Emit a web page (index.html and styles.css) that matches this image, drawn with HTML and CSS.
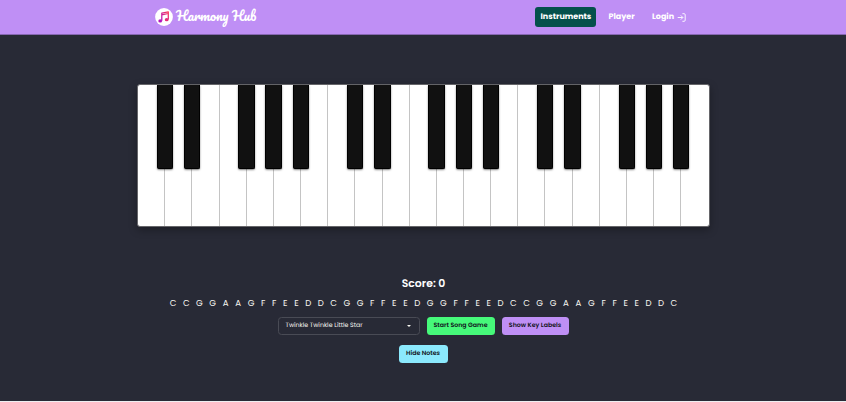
FILE: index.html
```
<!DOCTYPE html>
<html lang="en">
<head>
<meta charset="utf-8">
<title>Harmony Hub</title>
<link rel="stylesheet" href="styles.css">
</head>
<body>
<header class="navbar">
  <a class="brand">
    <svg class="brand-icon" viewBox="0 0 18 18">
      <defs><linearGradient id="note" x1="0" y1="1" x2="1" y2="0"><stop offset="0" stop-color="#b010c0"/><stop offset="1" stop-color="#ff3b55"/></linearGradient></defs>
      <circle cx="9" cy="9" r="8.9" fill="#fff"/>
      <path d="M6.8 12.8V5.1l6.5-1.3v7.7M6.8 6.8l6.5-1.3" fill="none" stroke="url(#note)" stroke-width="1.25" stroke-linejoin="round"/>
      <ellipse cx="5.2" cy="12.9" rx="1.9" ry="1.6" fill="#b514bb"/>
      <ellipse cx="11.7" cy="11.7" rx="1.9" ry="1.6" fill="#e42b78"/>
    </svg>
    <span class="wordmark">Harmony Hub</span>
  </a>
  <nav class="links">
    <a class="link active">Instruments</a>
    <a class="link">Player</a>
    <a class="link">Login
      <svg class="login-icon" viewBox="0 0 9 9"><path d="M.7 4.5h5M3.8 2.4l2.1 2.1-2.1 2.1M5.4.7h1.7q1.1 0 1.1 1.1v5.4q0 1.1-1.1 1.1H5.4"/></svg></a>
  </nav>
</header>
<main>
  <div class="piano" id="piano"></div>
  <h1 class="score">Score: 0</h1>
  <div class="notes" id="notes"></div>
  <div class="controls">
    <div class="select"><span>Twinkle Twinkle Little Star</span><i class="caret"></i></div>
    <button class="btn start">Start Song Game</button>
    <button class="btn labels">Show Key Labels</button>
  </div>
  <button class="btn hide">Hide Notes</button>
</main>
<script src="app.js"></script>
</body>
</html>
```
FILE: styles.css
```
* { box-sizing: border-box; }
body {
  margin: 0;
  height: 402px;
  overflow: hidden;
  background: #282a36;
  color: #f8f8f2;
  font-family: Poppins, "Open Sans", sans-serif;
  text-rendering: geometricPrecision;
}
.navbar {
  height: 35px;
  padding: 0 155px;
  display: flex;
  justify-content: space-between;
  background: #bf8ff5;
  border-bottom: 1px solid #8767b2;
}
.brand { display: flex; align-items: flex-start; }
.brand-icon { width: 18px; height: 18px; margin-top: 8px; }
.wordmark {
  margin: 3px 0 0 3px;
  color: #fff;
  font: 400 13.35px/28px Pacifico, cursive;
  white-space: nowrap;
}
.links { display: flex; gap: 7px; margin-top: 7px; }
.link {
  height: 20px;
  padding: 0 5.5px;
  display: flex;
  align-items: center;
  border-radius: 3px;
  color: #fff;
  font-size: 8px;
  line-height: 20px;
  font-weight: 700;
  white-space: nowrap;
}
.link.active { width: 61px; background: #05504c; }
.link:nth-child(2) { width: 37px; }
.link:nth-child(3) { width: 44px; padding-left: 5px; }
.login-icon { width: 9px; height: 9px; margin-left: 3px; fill: none; stroke: #fff; stroke-width: .9; flex: none; }
main { display: flex; flex-direction: column; align-items: center; height: 366px; }
body::after { content: ""; display: block; height: 1px; background: #eeeef1; }
.piano {
  width: 573px;
  height: 143px;
  flex: none;
  margin-top: 49px;
  padding-left: .6px;
  display: flex;
  border: 1px solid #66666a;
  border-radius: 3px;
  background: #fff;
  box-shadow: 0 3px 9px rgba(0, 0, 0, .3);
}
.white {
  position: relative;
  flex: 1;
  background: linear-gradient(#c4c4c4, #c4c4c4) right / 1px 100% no-repeat;
}
.white:last-child { background: none; }
.black {
  position: absolute;
  z-index: 1;
  top: 0;
  right: -8px;
  width: 16.4px;
  height: 84px;
  background: #111;
  border: 1px solid #000;
  border-top: 0;
  border-radius: 0 0 2px 2px;
  box-shadow: 0 1px 2px rgba(0, 0, 0, .5);
}
.score { margin: 48px 0 0; padding-left: 1px; font-size: 10.9px; line-height: 17px; font-weight: 600; color: #fff; }
.notes { display: flex; height: 14px; margin-top: 5px; padding-left: 1px; font-size: 8.6px; line-height: 14px; }
.note { text-align: center; }
.note-c { width: 13.1px; }
.note-g { width: 13.3px; }
.note-a { width: 12.55px; }
.note-f { width: 11px; }
.note-e { width: 11.15px; }
.note-d { width: 12.5px; }
.controls { display: flex; gap: 7px; margin-top: 6px; }
.select {
  width: 142px;
  height: 18px;
  padding: 0 8px 1px 7px;
  display: flex;
  align-items: center;
  justify-content: space-between;
  border: 1px solid #494b55;
  border-radius: 3.5px;
  font-size: 6.25px;
}
.caret { border: 2px solid transparent; border-top-color: #f8f8f2; border-bottom: 0; }
.btn {
  height: 18px;
  padding: 0 0 1px;
  display: flex;
  align-items: center;
  justify-content: center;
  border: 0;
  border-radius: 3.5px;
  color: #111320;
  font: 600 6.25px Poppins, "Open Sans", sans-serif;
  text-rendering: geometricPrecision;
  white-space: nowrap;
}
.start { width: 68px; background: #46f97a; }
.labels { width: 67px; background: #bf8ff5; }
.hide { width: 49px; margin-top: 10px; background: #8be9fd; }
```
FILE: app.js
```
const piano = document.getElementById("piano");
const sharps = [0, 1, 3, 4, 5];
for (let i = 0; i < 21; i++) {
  const key = document.createElement("div");
  key.className = "white";
  if (sharps.includes(i % 7)) {
    const black = document.createElement("div");
    black.className = "black";
    key.append(black);
  }
  piano.append(key);
}
const notes = document.getElementById("notes");
for (const n of "CCGGAAGFFEEDDCGGFFEEDGGFFEEDCCGGAAGFFEEDDC") {
  const el = document.createElement("span");
  el.className = "note note-" + n.toLowerCase();
  el.textContent = n;
  notes.append(el);
}
```
